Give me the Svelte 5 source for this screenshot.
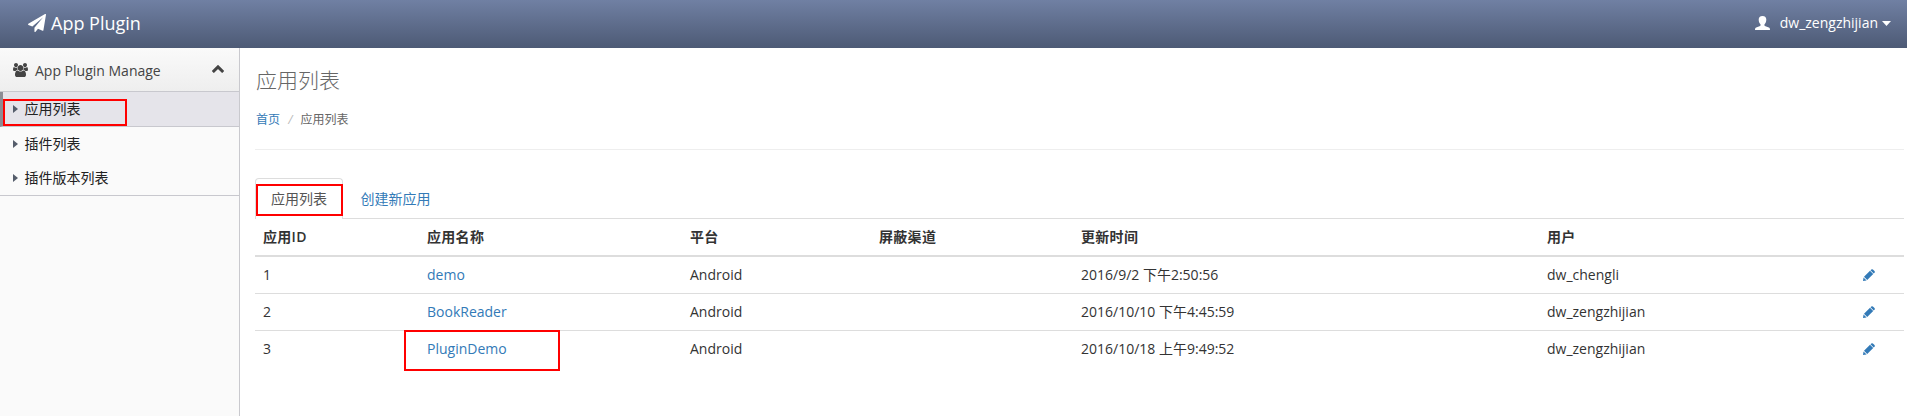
<script>
  const menu = ['应用列表', '插件列表', '插件版本列表'];
  const heads = ['应用ID', '应用名称', '平台', '屏蔽渠道', '更新时间', '用户', ''];
  const rows = [
    ['1', 'demo', 'Android', '', '2016/9/2 下午2:50:56', 'dw_chengli'],
    ['2', 'BookReader', 'Android', '', '2016/10/10 下午4:45:59', 'dw_zengzhijian'],
    ['3', 'PluginDemo', 'Android', '', '2016/10/18 上午9:49:52', 'dw_zengzhijian']
  ];
</script>

<div class="page">
  <header>
    <a class="brand" href="#home">
      <svg class="plane" viewBox="0 0 1792 1792"><path d="M1764 11q33 24 27 64l-256 1536q-5 29-32 45-14 8-31 8-11 0-24-5l-453-185-242 295q-18 23-49 23-13 0-22-4-19-7-30.500-23.500t-11.500-36.500v-349l864-1059-1069 925-395-162q-37-14-40-55-2-40 32-59l1664-960q15-9 32-9 20 0 36 11z" /></svg>
      <span>App Plugin</span>
    </a>
    <div class="user">
      <svg class="person" viewBox="0 0 15 14"><path d="M7.500 0C10.200 0 11.300 1.500 11.300 3.600C11.300 5.600 10.700 7.200 9.600 8.300C9.200 8.800 9.300 9.500 9.900 9.900L13.800 11.500C14.600 11.900 15 12.600 15 14H0C0 12.600.4 11.900 1.200 11.500L5.100 9.900C5.700 9.500 5.800 8.800 5.400 8.300C4.300 7.200 3.700 5.600 3.700 3.600C3.700 1.500 4.800 0 7.500 0Z" /></svg>
      <span>dw_zengzhijian</span>
      <svg class="caret" viewBox="0 0 9 5"><path d="M0 0H9L4.500 5Z" /></svg>
    </div>
  </header>
  <div class="body">
    <aside>
      <div class="group">
        <svg class="users" viewBox="0 0 1920 1792"><path d="M593 896q-162 5-265 128h-134q-82 0-138-40.500t-56-118.500q0-353 124-353 6 0 43.500 21t97.500 42.500 119 21.500q67 0 133-23-5 37-5 66 0 139 81 256zm1071 637q0 120-73 189.500t-194 69.500h-874q-121 0-194-69.500t-73-189.500q0-53 3.500-103.500t14-109 26.500-108.500 43-97.500 62-81 85.500-53.500 111.500-20q10 0 43 21.500t73 48 107 48 135 21.500 135-21.500 107-48 73-48 43-21.500q61 0 111.500 20t85.500 53.500 62 81 43 97.500 26.500 108.500 14 109 3.500 103.500zm-1024-1277q0 106-75 181t-181 75-181-75-75-181 75-181 181-75 181 75 75 181zm704 384q0 159-112.500 271.500t-271.500 112.500-271.500-112.500-112.500-271.500 112.500-271.500 271.500-112.500 271.500 112.500 112.500 271.500zm576 225q0 78-56 118.500t-138 40.500h-134q-103-123-265-128 81-117 81-256 0-29-5-66 66 23 133 23 59 0 119-21.500t97.500-42.500 43.500-21q124 0 124 353zm-128-609q0 106-75 181t-181 75-181-75-75-181 75-181 181-75 181 75 75 181z" /></svg>
        <span>App Plugin Manage</span>
        <svg class="chevron" viewBox="0 0 12 8"><path d="M.8 7L6 1.900L11.200 7" /></svg>
      </div>
      <ul>
        {#each menu as item, i}
          <li class:active={i === 0}>
            <i class="arrow"></i><span>{item}</span>
            {#if i === 0}<b class="mark menu-mark"></b>{/if}
          </li>
        {/each}
      </ul>
    </aside>
    <main>
      <h1>应用列表</h1>
      <nav class="crumbs"><a href="#home">首页</a><i>/</i><span>应用列表</span></nav>
      <hr />
      <div class="tabs">
        <div class="tab on">应用列表<b class="mark tab-mark"></b></div>
        <div class="tab">创建新应用</div>
      </div>
      <table>
        <colgroup>
          <col style="width:164px" /><col style="width:263px" /><col style="width:189px" /><col style="width:202px" /><col style="width:466px" /><col style="width:316px" /><col />
        </colgroup>
        <thead>
          <tr>{#each heads as h}<th>{h}</th>{/each}</tr>
        </thead>
        <tbody>
          {#each rows as r, ri}
            <tr>
              {#each r as c, ci}
                <td>
                  {#if ci === 1}<a href="#app">{c}</a>{:else}{c}{/if}
                  {#if ri === 2 && ci === 1}<b class="mark row-mark"></b>{/if}
                </td>
              {/each}
              <td>
                <svg class="pencil" viewBox="0 0 12 12"><path d="M8.300.5Q9.100-.2 9.900.5L11.500 2.100Q12.200 2.900 11.500 3.700L10.700 4.500L7.500 1.300ZM7 1.800L10.200 5L4.200 11L1 7.800ZM.5 8.400L3.600 11.500L0 12Z" /></svg>
              </td>
            </tr>
          {/each}
        </tbody>
      </table>
    </main>
  </div>
</div>

<style>
  :global(body) { margin: 0; background: #fff; }
  .page {
    height: 416px;
    overflow: hidden;
    display: flex;
    flex-direction: column;
    font: 14px/20px 'Open Sans', 'Noto Sans CJK SC', sans-serif;
    color: #333;
  }
  a { color: #337ab7; text-decoration: none; }
  svg { display: block; fill: currentColor; flex: none; }
  header {
    height: 48px;
    flex: none;
    box-sizing: border-box;
    display: flex;
    justify-content: space-between;
    align-items: center;
    padding: 0 16px 2px 28px;
    background: linear-gradient(#7080a3, #4d5a75);
    color: #fff;
  }
  .brand { display: flex; align-items: center; gap: 5px; color: #fff; font-size: 18px; }
  .plane { width: 18px; height: 18px; }
  .user { display: flex; align-items: center; }
  .person { width: 15px; height: 14px; margin-right: 10px; }
  .caret { width: 9px; height: 5px; margin-left: 4px; }
  .body { flex: 1; display: flex; min-height: 0; }
  aside { width: 239px; flex: none; border-right: 1px solid #c9c9ce; background: #fafafa; }
  .group {
    height: 43px;
    display: flex;
    align-items: center;
    padding: 0 15px 0 13px;
    border-bottom: 1px solid #c8c8ce;
    background: linear-gradient(#fafafa, #eee);
    color: #444;
  }
  .group span { flex: 1; margin: 2px 0 0 7px; }
  .users { width: 15px; height: 14px; }
  .chevron { width: 12px; height: 8px; margin-bottom: 2px; fill: none; stroke: #444; stroke-width: 3; }
  ul { margin: 0; padding: 0; list-style: none; border-bottom: 1px solid #c8c8ce; }
  li { position: relative; height: 34px; display: flex; align-items: center; padding-left: 13px; color: #222; }
  li.active { padding-left: 10px; border-left: 3px solid #8c8c94; border-bottom: 1px solid #c8c8ce; background: #e5e4ea; }
  .arrow { border: 4px solid transparent; border-left: 5px solid #555d6b; border-right: 0; margin-right: 6.500px; }
  .mark { position: absolute; box-sizing: border-box; border: 2px solid #f00; }
  .menu-mark { left: 0; top: 7px; width: 124px; height: 27px; }
  main { flex: 1; min-width: 0; padding: 18px 3px 0 15px; }
  h1 { margin: 0; padding-left: 1px; font-size: 21px; line-height: 28px; font-weight: 300; color: #666; }
  .crumbs { display: flex; margin-top: 16px; font-size: 12px; line-height: 20px; color: #666; }
  .crumbs a { margin-left: 1px; }
  .crumbs i { width: 20.500px; text-align: center; color: #bbb; }
  hr { border: 0; border-top: 1px solid #eee; margin: 19px 0 28px; }
  .tabs { display: flex; height: 40px; border-bottom: 1px solid #ddd; }
  .tab { position: relative; box-sizing: border-box; height: 41px; line-height: 20px; padding: 11px 15px; color: #337ab7; margin-right: 2.500px; }
  .tab.on { width: 88px; padding: 10px 14px 10px 15px; border: 1px solid #ddd; border-bottom: 0; border-radius: 4px 4px 0 0; background: #fff; color: #555; }
  .tab-mark { left: 0; top: 5px; width: 87px; height: 32px; }
  table { width: 100%; table-layout: fixed; border-collapse: separate; border-spacing: 0; }
  th { height: 36px; padding: 0 8px; text-align: left; line-height: 20px; font-weight: 600; letter-spacing: .3px; border-bottom: 2px solid #ddd; }
  td { position: relative; height: 36px; padding: 0 8px; border-bottom: 1px solid #ddd; }
  tr:last-child td { border-bottom: 0; }
  .pencil { width: 12px; height: 12px; color: #337ab7; }
  .row-mark { left: -15px; top: -1px; width: 156px; height: 41px; }
</style>
